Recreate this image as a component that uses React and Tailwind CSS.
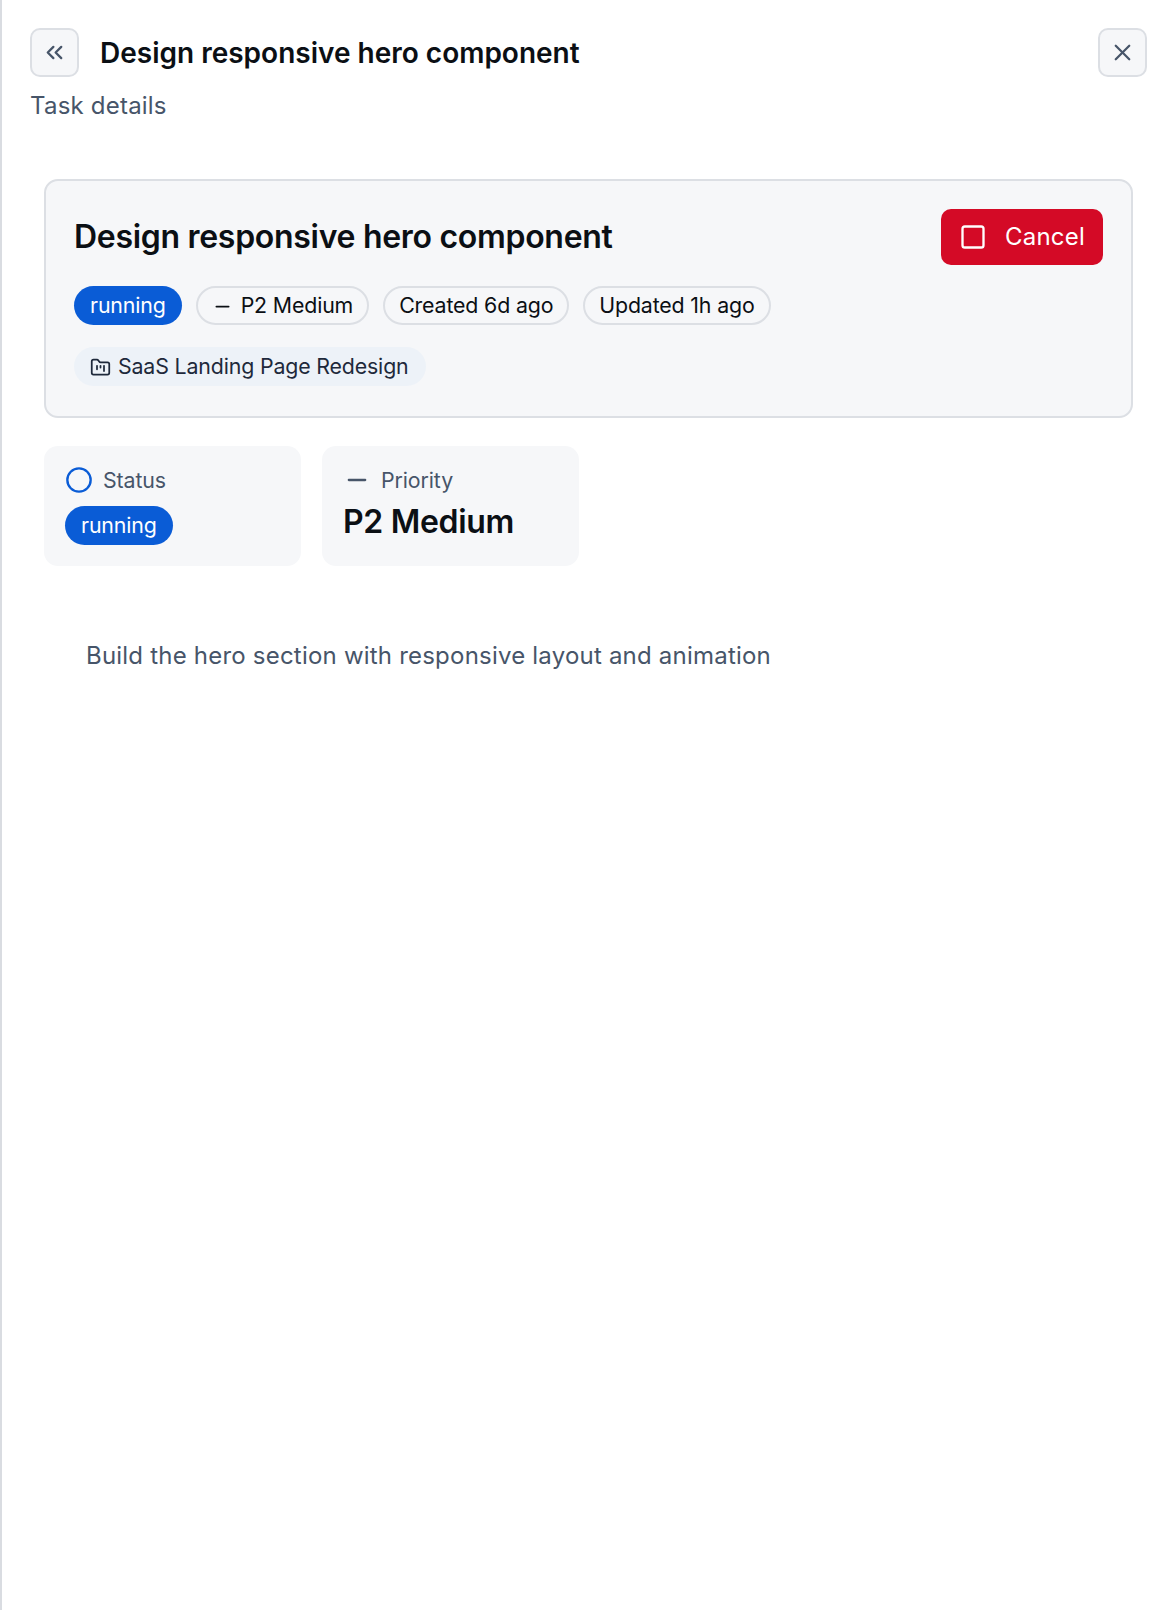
import { ChevronsLeft, Circle, FolderKanban, Minus, Square, X } from "lucide-react";

const pill = "inline-flex h-[39px] items-center rounded-full pt-px text-[21.33px] leading-none tracking-[-0.15px]";

function Running() {
  return <span className={`${pill} bg-[#0a5cd6] px-4 text-white`}>running</span>;
}

function Outline({ children }) {
  return (
    <span className={`${pill} border-2 border-[#dcdfe4] px-[14px] text-[#0b0f14]`}>{children}</span>
  );
}

export default function App() {
  return (
    <div className="min-h-[1610px] border-l-2 border-[#d9dce1] bg-white pl-7 pr-[29px] pt-7 font-['Inter',sans-serif]">
      <header>
        <div className="flex items-center justify-between">
          <div className="flex items-center gap-[21px]">
            <button className="flex h-[49px] w-[49px] items-center justify-center rounded-[10px] border-2 border-[#dcdfe4] bg-[#f6f7f9] text-[#475569]">
              <ChevronsLeft size={27} />
            </button>
            <h2 className="text-[28px] font-semibold leading-none text-[#0b0f14]">Design responsive hero component</h2>
          </div>
          <button className="flex h-[49px] w-[49px] items-center justify-center rounded-[10px] border-2 border-[#dcdfe4] bg-[#f6f7f9] text-[#475569]">
            <X size={27} />
          </button>
        </div>
        <p className="mt-[13px] text-[24px] leading-8 tracking-[0.21px] text-[#475569]">Task details</p>
      </header>

      <main className="pl-[14px] pr-[14px] pt-[57px]">
        <section className="rounded-[14px] border-2 border-[#dcdfe4] bg-[#f6f7f9] pb-[30px] pl-7 pr-7 pt-7">
          <div className="flex items-center justify-between">
            <h1 className="text-[32px] font-semibold leading-none tracking-[-0.3px] text-[#0b0f14]">Design responsive hero component</h1>
            <button className="flex h-14 items-center gap-[18px] rounded-[10px] bg-[#d40a26] pl-[18px] pr-[18px] text-[24px] tracking-[0.21px] text-white">
              <Square size={28} />
              Cancel
            </button>
          </div>
          <div className="mt-[21px] flex gap-[14px]">
            <Running />
            <Outline>
              <Minus size={21} className="mr-2" />
              P2 Medium
            </Outline>
            <Outline>Created 6d ago</Outline>
            <Outline>Updated 1h ago</Outline>
          </div>
          <div className="mt-[22px] flex">
            <span className={`${pill} gap-[7px] bg-[#edf2f8] pl-4 pr-[17px] text-[#1e293b]`}>
              <FolderKanban size={21} />
              SaaS Landing Page Redesign
            </span>
          </div>
        </section>

        <div className="mt-7 flex gap-[21px]">
          <div className="h-[120px] w-[257px] rounded-[14px] bg-[#f6f7f9] px-[21px] pt-5">
            <div className="flex items-center gap-[10px] text-[21.33px] leading-7 tracking-[-0.1px] text-[#475569]">
              <Circle size={28} className="text-[#0a5cd6]" />
              Status
            </div>
            <div className="mt-3"><Running /></div>
          </div>
          <div className="h-[120px] w-[257px] rounded-[14px] bg-[#f6f7f9] px-[21px] pt-5">
            <div className="flex items-center gap-[10px] text-[21.33px] leading-7 tracking-[-0.1px] text-[#475569]">
              <Minus size={28} />
              Priority
            </div>
            <p className="mt-2 text-[32px] font-semibold leading-10 tracking-[-0.3px] text-[#0b0f14]">P2 Medium</p>
          </div>
        </div>

        <p className="mt-[74px] pl-[42px] text-[24px] leading-8 tracking-[0.21px] text-[#475569]">Build the hero section with responsive layout and animation</p>
      </main>
    </div>
  );
}
